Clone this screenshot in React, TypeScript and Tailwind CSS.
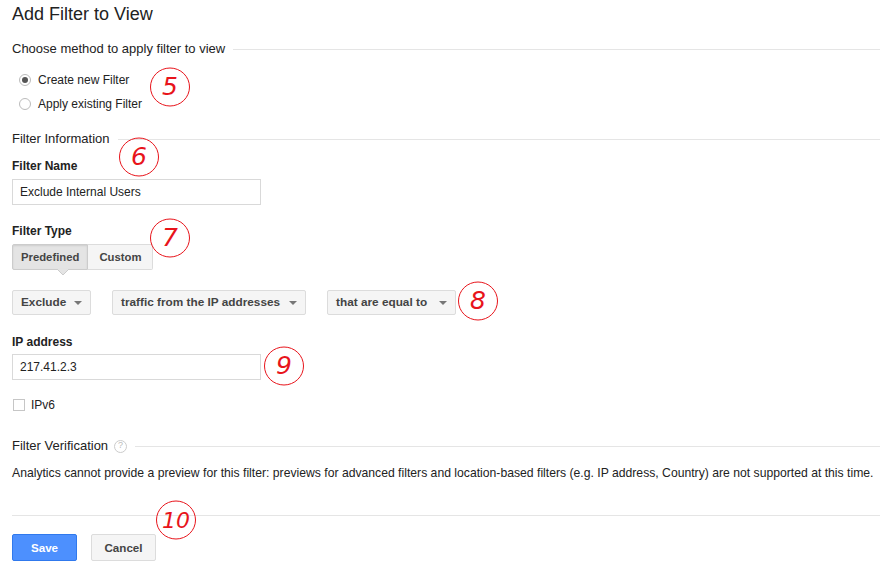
import React from 'react';

const font = { fontFamily: '"Liberation Sans", Arial, sans-serif' };

function SectionHead({ title, help }: { title: string; help?: boolean }) {
  return (
    <div className="flex items-center h-[18px] text-[13px] text-[#222]">
      <span className="whitespace-nowrap">{title}</span>
      {help && (
        <span className="ml-[6px] flex h-[13px] w-[13px] items-center justify-center rounded-full border border-[#ccc] text-[9px] text-[#bbb]">
          ?
        </span>
      )}
      <div className="ml-[8px] h-px flex-1 bg-[#e5e5e5]" />
    </div>
  );
}

function Caret() {
  return (
    <svg width="8" height="4" viewBox="0 0 8 4" className="ml-[8px] shrink-0">
      <path d="M0 0h8L4 4z" fill="#777" />
    </svg>
  );
}

function Select({ label, w }: { label: string; w: string }) {
  return (
    <div
      className={`flex h-[25px] items-center justify-between whitespace-nowrap rounded-[2px] border border-[#dcdcdc] bg-[#f5f5f5] pl-[8px] pr-[8px] text-[11.8px] font-bold text-[#444] ${w}`}
    >
      <span>{label}</span>
      <Caret />
    </div>
  );
}

function Mark({ n, x, y }: { n: string; x: number; y: number }) {
  return (
    <div className="pointer-events-none absolute" style={{ left: x - 21, top: y - 21 }}>
      <svg width="42" height="42" viewBox="0 0 42 42">
        <ellipse cx="21" cy="21" rx="19.5" ry="19" fill="none" stroke="#e8141b" strokeWidth="1" />
        <text
          x="21"
          y="29"
          textAnchor="middle"
          fill="#e8141b"
          fontSize={n.length > 1 ? 22 : 25}
          fontStyle="italic"
          fontFamily='"DejaVu Sans", sans-serif'
          fontWeight="300"
        >
          {n}
        </text>
      </svg>
    </div>
  );
}

export default function App() {
  return (
    <div className="relative h-[568px] w-[880px] overflow-hidden bg-white" style={font}>
      <div className="pl-[12px]">
        {/* Title */}
        <h1 className="pt-[3px] text-[18px] leading-[22px] text-[#222]">Add Filter to View</h1>

        <div className="mt-[15px]">
          <SectionHead title="Choose method to apply filter to view" />
        </div>

        {/* Method radios */}
        <div className="mt-[14px] flex flex-col gap-[8px] pl-[7px] text-[12px] text-[#222]">
          <label className="flex h-[16px] items-center gap-[7px]">
            <span className="flex h-[12px] w-[12px] items-center justify-center rounded-full border border-[#bbb] bg-white">
              <span className="h-[6px] w-[6px] rounded-full bg-[#555]" />
            </span>
            Create new Filter
          </label>
          <label className="flex h-[16px] items-center gap-[7px]">
            <span className="h-[12px] w-[12px] rounded-full border border-[#bbb] bg-white" />
            Apply existing Filter
          </label>
        </div>

        <div className="mt-[18px]">
          <SectionHead title="Filter Information" />
        </div>

        <div className="mt-[10px] text-[12px] font-bold leading-[16px] text-[#222]">Filter Name</div>
        <div className="mt-[5px] flex h-[26px] w-[249px] items-center border border-[#d9d9d9] px-[7px] text-[12px] text-[#222]">
          Exclude Internal Users
        </div>

        <div className="mt-[18px] text-[12px] font-bold leading-[16px] text-[#222]">Filter Type</div>
        <div className="relative mt-[5px] flex h-[26px] w-fit whitespace-nowrap text-[11.3px] font-bold text-[#444]">
          <div className="flex items-center rounded-l-[2px] border border-[#ccc] bg-[#e4e4e4] px-[8px] shadow-[inset_0_1px_2px_rgba(0,0,0,0.1)]">
            Predefined
          </div>
          <div className="flex items-center rounded-r-[2px] border border-l-0 border-[#dcdcdc] bg-[#f5f5f5] px-[11px]">
            Custom
          </div>
          <svg width="12" height="6" viewBox="0 0 12 6" className="absolute left-[45px] top-[25px]">
            <path d="M0 0h12L6 6z" fill="#e4e4e4" />
            <path d="M0 0L6 6L12 0" fill="none" stroke="#ccc" />
          </svg>
        </div>

        {/* Dropdown row */}
        <div className="mt-[20px] flex gap-[21px]">
          <Select label="Exclude" w="w-[79px]" />
          <Select label="traffic from the IP addresses" w="w-[194px]" />
          <Select label="that are equal to" w="w-[129px]" />
        </div>

        <div className="mt-[19px] text-[12px] font-bold leading-[16px] text-[#222]">IP address</div>
        <div className="mt-[4px] flex h-[26px] w-[249px] items-center border border-[#d9d9d9] px-[7px] text-[12px] text-[#222]">
          217.41.2.3
        </div>

        <label className="mt-[18px] flex h-[14px] items-center gap-[6px] pl-[1px] text-[12px] text-[#222]">
          <span className="h-[12px] w-[12px] border border-[#c6c6c6] bg-white" />
          IPv6
        </label>

        <div className="mt-[25px]">
          <SectionHead title="Filter Verification" help />
        </div>

        <p className="mt-[10px] whitespace-nowrap text-[12.2px] leading-[16px] text-[#222]">
          Analytics cannot provide a preview for this filter: previews for advanced filters and location-based filters (e.g. IP
          address, Country) are not supported at this time.
        </p>

        <div className="mt-[34px] h-px bg-[#e5e5e5]" />

        {/* Actions */}
        <div className="mt-[18px] flex gap-[14px] text-[11.6px] font-bold">
          <button className="h-[27px] w-[65px] rounded-[2px] border border-[#3079ed] bg-[#4d90fe] text-white">
            Save
          </button>
          <button className="h-[27px] w-[65px] rounded-[2px] border border-[#dcdcdc] bg-[#f5f5f5] text-[#444]">
            Cancel
          </button>
        </div>
      </div>

      {/* Annotation marks */}
      <Mark n="5" x={170} y={87} />
      <Mark n="6" x={139} y={157} />
      <Mark n="7" x={170} y={238} />
      <Mark n="8" x={478} y={301} />
      <Mark n="9" x={284} y={366} />
      <Mark n="10" x={176} y={520} />
    </div>
  );
}
